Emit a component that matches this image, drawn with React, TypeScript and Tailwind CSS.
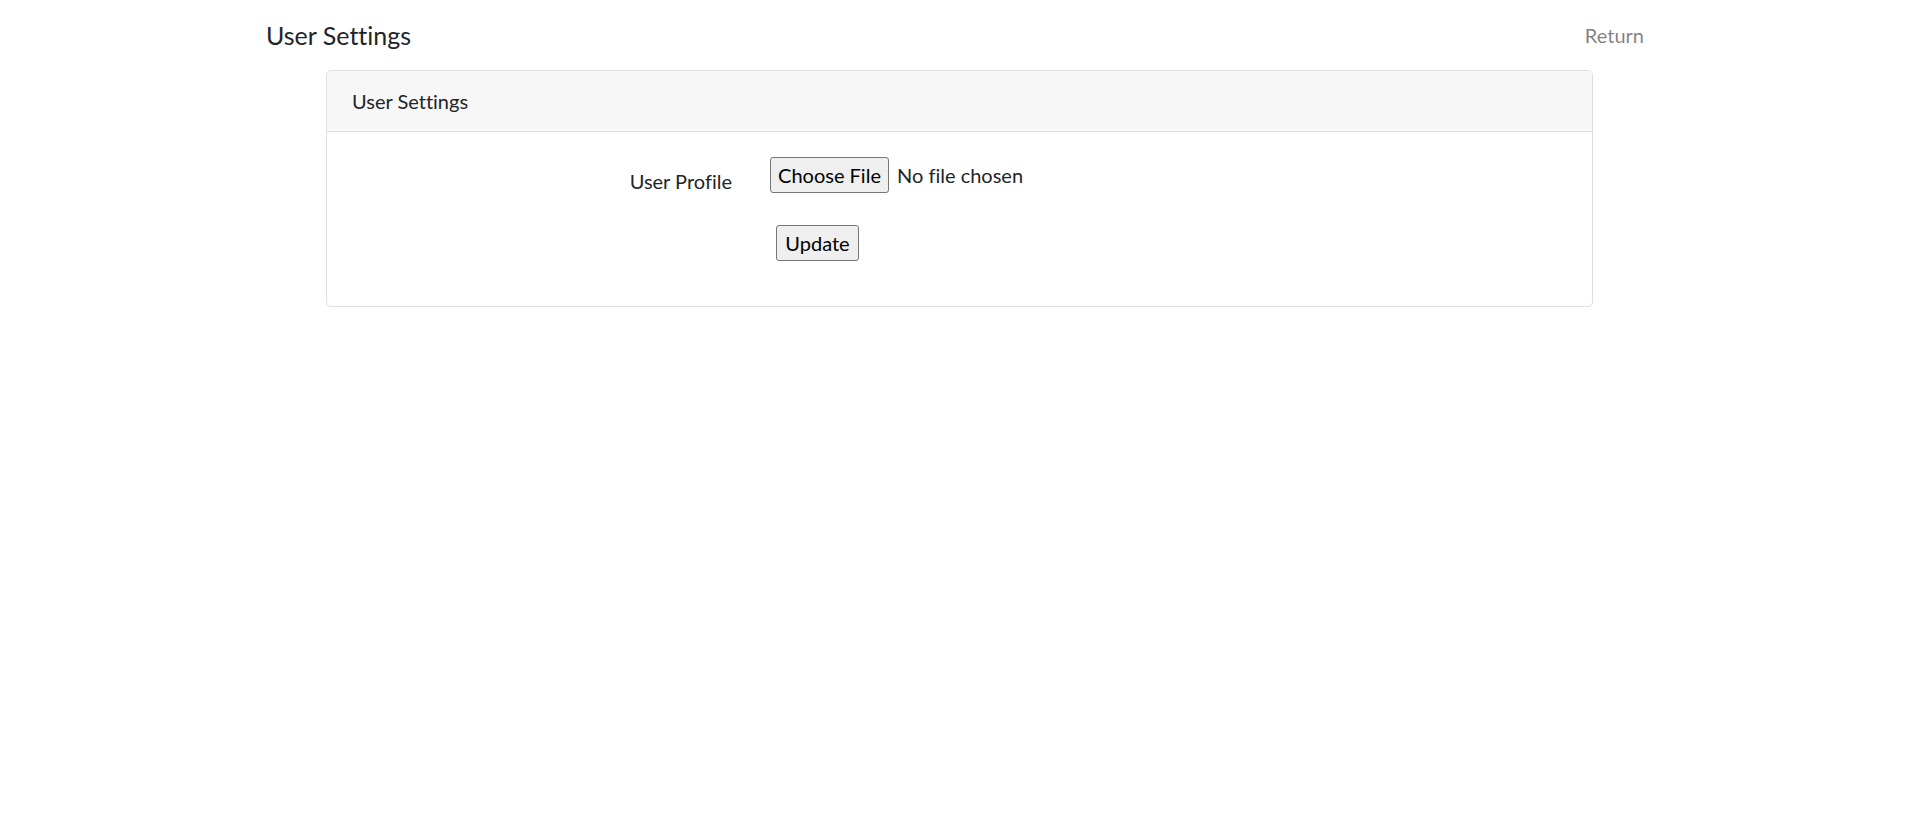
export default function App() {
  return (
    <div className="min-h-screen bg-white text-[#212529] font-['Lato','Liberation_Sans',sans-serif] text-[20px] leading-[30px] [font-variant-ligatures:none]">
      <div className="w-[1425px] mx-auto px-[19px]">
        <div className="flex justify-between items-start pt-[20px]">
          <h5 className="text-[25px] leading-[30px] font-normal">User Settings</h5>
          <a href="#" className="pr-[9px] text-[rgba(0,0,0,0.5)]">
            Return
          </a>
        </div>

        <div className="mx-[60px] mt-[20px] border border-[#dfdfdf] rounded-[5px]">
          <div className="px-[25px] py-[15px] bg-[#f7f7f7] border-b border-[#dfdfdf] rounded-t-[5px]">
            User Settings
          </div>
          <div className="p-[25px]">
            <form onSubmit={(e) => e.preventDefault()}>
              <div className="flex">
                <label
                  htmlFor="profile"
                  className="w-[380px] text-right pt-[9px] pb-[9px] leading-[30px]"
                >
                  User Profile
                </label>
                <div className="ml-[38px]">
                  <input
                    id="profile"
                    type="file"
                    className="h-[36px] leading-[36px] text-[20px] file:w-[119px] file:h-[36px] file:mr-[8px] file:bg-[#efefef] file:border file:border-solid file:border-[#767676] file:rounded-[3px] file:text-black file:text-[20px] file:leading-[30px] file:cursor-pointer"
                  />
                </div>
              </div>
              <div className="flex mt-[20px] mb-[20px]">
                <div className="w-[380px]" />
                <div className="ml-[44px]">
                  <button
                    type="submit"
                    className="w-[83px] h-[36px] bg-[#efefef] border border-[#767676] rounded-[3px] text-black text-[20px] leading-[30px]"
                  >
                    Update
                  </button>
                </div>
              </div>
            </form>
          </div>
        </div>
      </div>
    </div>
  );
}
